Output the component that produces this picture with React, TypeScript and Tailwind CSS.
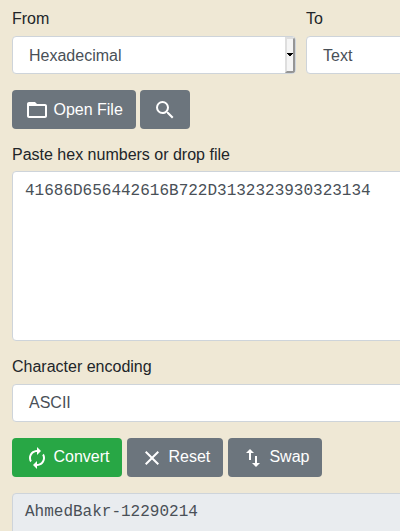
import type { ReactNode } from "react";

function Icon({ d }: { d: string }) {
  return (
    <svg viewBox="0 0 24 24" className="h-6 w-6 shrink-0" fill="currentColor" aria-hidden="true">
      <path d={d} />
    </svg>
  );
}

const icons = {
  folder:
    "M20 6h-8l-2-2H4c-1.1 0-1.99.9-1.99 2L2 18c0 1.1.9 2 2 2h16c1.1 0 2-.9 2-2V8c0-1.1-.9-2-2-2zm0 12H4V8h16v10z",
  search:
    "M15.5 14h-.79l-.28-.27A6.471 6.471 0 0 0 16 9.5 6.5 6.5 0 1 0 9.5 16c1.61 0 3.09-.59 4.23-1.57l.27.28v.79l5 4.99L20.49 19l-4.99-5zm-6 0C7.01 14 5 11.99 5 9.5S7.01 5 9.5 5 14 7.01 14 9.5 11.99 14 9.5 14z",
  renew:
    "M12 6v3l4-4-4-4v3c-4.42 0-8 3.58-8 8 0 1.57.46 3.03 1.24 4.26L6.7 14.8A5.87 5.87 0 0 1 6 12c0-3.31 2.69-6 6-6zm6.76 1.74L17.3 9.2c.44.84.7 1.79.7 2.8 0 3.31-2.69 6-6 6v-3l-4 4 4 4v-3c4.42 0 8-3.58 8-8 0-1.57-.46-3.03-1.24-4.26z",
  close:
    "M19 6.41L17.59 5 12 10.59 6.41 5 5 6.41 10.59 12 5 17.59 6.41 19 12 13.41 17.59 19 19 17.59 13.41 12z",
  swap: "M16 17.01V10h-2v7.01h-3L15 21l4-3.99h-3zM9 3L5 6.99h3V14h2V6.99h3L9 3z",
};

function Button({ icon, className, children }: { icon: string; className: string; children?: ReactNode }) {
  return (
    <button type="button" className={`flex h-[39px] items-start gap-[4.45px] rounded pt-2 pl-[13px] text-white ${className}`}>
      <Icon d={icon} />
      {children}
    </button>
  );
}

function Field({ label, children }: { label: string; children: ReactNode }) {
  return (
    <div className="min-w-0">
      <div className="mb-[5px] h-6 whitespace-nowrap">{label}</div>
      {children}
    </div>
  );
}

export default function App() {
  return (
    <main className="h-[531px] w-[400px] overflow-hidden bg-[#efe8d5] pt-[7px] pl-3 font-['Liberation_Sans',Arial,sans-serif] text-base text-[#212529]">
      <div className="grid w-[580px] grid-cols-[284px_284px] gap-[10px]">
        <Field label="From">
          <div className="flex h-[38px] items-stretch justify-between overflow-hidden rounded border border-[#ced4da] bg-white pl-4 text-[#495057]">
            <span className="leading-[38px]">Hexadecimal</span>
            <span className="flex w-[10px] items-center justify-center border-2 border-t-[#dedede] border-r-[#959595] border-b-[#959595] border-l-[#dedede] bg-[#f5f5f5]">
              <svg viewBox="0 0 6 4" className="h-1 w-1.5 shrink-0" fill="#000" shapeRendering="crispEdges" aria-hidden="true">
                <path d="M0 0h6v1H5v1H4v1H2V2H1V1H0z" />
              </svg>
            </span>
          </div>
        </Field>
        <Field label="To">
          <div className="h-[38px] rounded border border-[#ced4da] bg-white pl-4 leading-[38px] text-[#495057]">Text</div>
        </Field>
      </div>

      <div className="mt-4 flex gap-1">
        <Button icon={icons.folder} className="w-[124px] bg-[#6c757d]">
          <span className="whitespace-nowrap">Open File</span>
        </Button>
        <Button icon={icons.search} className="w-[50px] bg-[#6c757d]" />
      </div>

      <div className="mt-[14px] w-[578px]">
        <div className="mb-1 h-6">Paste hex numbers or drop file</div>
        <div className="h-[170px] rounded border border-[#ced4da] bg-white px-3 py-[7px] font-['Liberation_Mono',monospace] text-[#495057]">
          41686D656442616B722D3132323930323134
        </div>
      </div>

      <div className="mt-[14px] w-[578px]">
        <Field label="Character encoding">
          <div className="h-[38px] rounded border border-[#ced4da] bg-white pl-4 leading-9 text-[#495057]">ASCII</div>
        </Field>
      </div>

      <div className="mt-4 flex gap-[5px]">
        <Button icon={icons.renew} className="w-[110px] bg-[#28a745]">
          <span className="-mt-px">Convert</span>
        </Button>
        <Button icon={icons.close} className="w-[96px] bg-[#6c757d]">
          <span className="-mt-px">Reset</span>
        </Button>
        <Button icon={icons.swap} className="w-[94px] bg-[#6c757d]">
          <span className="-mt-px">Swap</span>
        </Button>
      </div>

      <div className="mt-4 h-[100px] w-[578px] rounded border border-[#ced4da] bg-[#e9ecef] px-3 py-1.5 font-['Liberation_Mono',monospace] text-[#495057]">
        AhmedBakr-12290214
      </div>
    </main>
  );
}
